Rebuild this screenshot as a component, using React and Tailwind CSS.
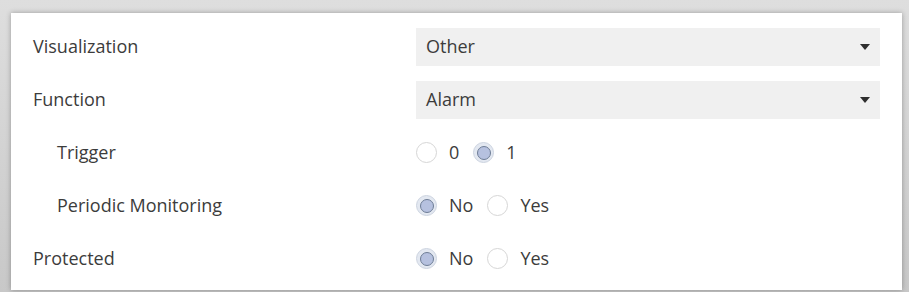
import { useState } from "react";

function Radio({ checked, label, onClick }) {
  return (
    <button type="button" onClick={onClick} className="flex items-center gap-[12px]">
      {checked ? (
        <span className="flex h-[21px] w-[21px] items-center justify-center rounded-full bg-[#e3e8f1] border border-[#cdd4e0]">
          <span className="h-[14px] w-[14px] rounded-full bg-[#b6c1df] border-[1.5px] border-[#6e7d96]" />
        </span>
      ) : (
        <span className="h-[21px] w-[21px] rounded-full bg-white border-[1.5px] border-[#d6d6d6]" />
      )}
      <span className="text-[18px] text-[#3c3c3c]">{label}</span>
    </button>
  );
}

function Select({ value }) {
  return (
    <div className="flex h-[38px] w-full items-center justify-between bg-[#f0f0f0] pl-[10px] pr-[10px]">
      <span className="text-[18px] text-[#3c3c3c]">{value}</span>
      <svg width="10" height="6" viewBox="0 0 10 6">
        <path d="M0 0 H10 L5 6 Z" fill="#2e2e2e" />
      </svg>
    </div>
  );
}

function Row({ label, indent, children }) {
  return (
    <div className="flex h-[53px] items-center">
      <div className={`w-[383px] text-[18px] text-[#3c3c3c] ${indent ? "pl-[24px]" : ""}`}>{label}</div>
      <div className="flex flex-1 items-center">{children}</div>
    </div>
  );
}

export default function App() {
  const [trigger, setTrigger] = useState("1");
  const [periodic, setPeriodic] = useState("No");
  const [prot, setProt] = useState("No");

  return (
    <div
      className="h-[292px] w-[909px] bg-gradient-to-b from-[#dedede] to-[#c8c8c8] pt-[13px] pl-[11px] pr-[7px] pb-[2px]"
      style={{ fontFamily: '"Open Sans", "Noto Sans", sans-serif' }}
    >
      <div className="h-full bg-white pt-[7px] pl-[22px] pr-[22px] shadow-[0_0_5px_rgba(0,0,0,0.3)]">
        <Row label="Visualization">
          <Select value="Other" />
        </Row>
        <Row label="Function">
          <Select value="Alarm" />
        </Row>
        <Row label="Trigger" indent>
          <div className="flex items-center gap-[14px]">
            <Radio checked={trigger === "0"} label="0" onClick={() => setTrigger("0")} />
            <Radio checked={trigger === "1"} label="1" onClick={() => setTrigger("1")} />
          </div>
        </Row>
        <Row label="Periodic Monitoring" indent>
          <div className="flex items-center gap-[14px]">
            <Radio checked={periodic === "No"} label="No" onClick={() => setPeriodic("No")} />
            <Radio checked={periodic === "Yes"} label="Yes" onClick={() => setPeriodic("Yes")} />
          </div>
        </Row>
        <Row label="Protected">
          <div className="flex items-center gap-[14px]">
            <Radio checked={prot === "No"} label="No" onClick={() => setProt("No")} />
            <Radio checked={prot === "Yes"} label="Yes" onClick={() => setProt("Yes")} />
          </div>
        </Row>
      </div>
    </div>
  );
}
